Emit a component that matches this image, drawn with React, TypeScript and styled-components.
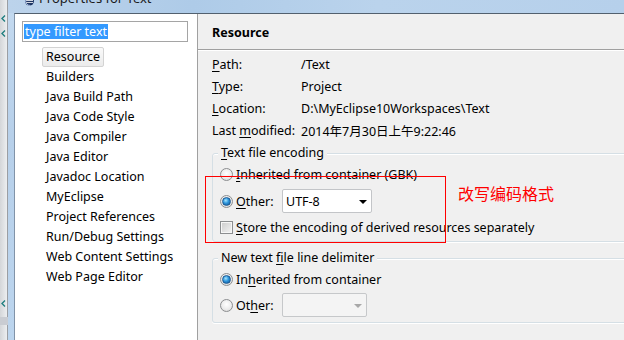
import React from "react";
import styled, { createGlobalStyle } from "styled-components";

const GlobalStyle = createGlobalStyle`
  html, body { margin: 0; padding: 0; background: #f0f0f0; }
  body {
    font-family: "Noto Sans", "Noto Sans CJK SC", sans-serif;
    font-size: 12.5px;
    color: #000;
  }
  * { box-sizing: border-box; }
`;

const Screen = styled.div`
  position: relative;
  width: 624px;
  height: 340px;
  overflow: hidden;
  display: flex;
`;

const Desktop = styled.div`
  width: 8px;
  flex: none;
  background: linear-gradient(to right, #d4d6d9, #eceef0);
  border-right: 1px solid #9b9ea3;
  display: flex;
  flex-direction: column;
  padding-top: 14px;
`;

const Chevron = styled.svg<{ $gap: number }>`
  display: block;
  margin-top: ${(p) => p.$gap}px;
  margin-left: 1px;
  flex: none;
`;

const DesktopBand = styled.div`
  margin-top: 10px;
  height: 8px;
  margin-right: -1px;
  background: #c9ccd2;
`;

const Window = styled.div`
  flex: 1;
  display: flex;
  flex-direction: column;
  background: linear-gradient(to bottom, #c4daf0, #b7d0ea 40%, #bcd5ee);
  min-width: 0;
`;

const TitleBar = styled.div`
  height: 13px;
  flex: none;
  display: flex;
  align-items: flex-start;
  padding-left: 17px;
  overflow: hidden;
  background: linear-gradient(to right, #bcd3eb, #aecbe8 30%, #bad3ec 60%, #b6d0eb);
`;

const TitleIcon = styled.svg`
  display: block;
  flex: none;
  margin-top: -5px;
`;

const TitleText = styled.span`
  margin-left: 5px;
  margin-top: -10px;
  font-size: 13px;
  line-height: 16px;
  color: #1a1a1a;
  white-space: nowrap;
`;

const Client = styled.div`
  flex: 1;
  display: flex;
  margin-left: 6px;
  border-top: 1px solid #52606e;
  border-left: 1px solid #8193a8;
  min-height: 0;
  background: #f0f0f0;
`;

const TreePane = styled.div`
  width: 183px;
  flex: none;
  background: #fff;
  border-right: 1px solid #a0a0a0;
  display: flex;
  flex-direction: column;
`;

const FilterBox = styled.div`
  margin: 7px 0 0 7px;
  width: 166px;
  height: 21px;
  border: 1px solid #a5a5a5;
  background: #fff;
  display: flex;
  align-items: center;
  padding-left: 1px;
`;

const FilterSel = styled.span`
  background: #3399ff;
  color: #fff;
  line-height: 15px;
  padding: 0 1px;
  white-space: nowrap;
`;

const TreeList = styled.div`
  margin-top: 5px;
  display: flex;
  flex-direction: column;
  padding-left: 31px;
`;

const TreeItem = styled.div<{ $selected?: boolean }>`
  height: 20px;
  display: flex;
  align-items: center;
  white-space: nowrap;
  & > span {
    padding: 0 3px;
    margin-left: -4px;
    line-height: 18px;
    border: 1px solid ${(p) => (p.$selected ? "#d3d3d3" : "transparent")};
    border-radius: 2px;
    background: ${(p) =>
      p.$selected ? "linear-gradient(to bottom, #fafafa, #ebebeb)" : "transparent"};
  }
`;

const RightPane = styled.div`
  flex: 1;
  display: flex;
  flex-direction: column;
  min-width: 0;
`;

const Header = styled.div`
  height: 36px;
  flex: none;
  padding: 11px 0 0 14px;
  font-weight: 700;
  font-size: 12.5px;
  line-height: 16px;
  border-bottom: 1px solid #a0a0a0;
  box-shadow: 0 1px 0 #ffffff;
`;

const Body = styled.div`
  padding: 3px 0 0 14px;
  display: flex;
  flex-direction: column;
`;

const InfoRow = styled.div`
  height: 22px;
  display: flex;
  align-items: center;
  white-space: nowrap;
`;

const InfoLabel = styled.span`
  width: 89px;
  flex: none;
`;

const Mn = styled.span`
  text-decoration: underline;
  text-underline-offset: 2px;
  text-decoration-thickness: 1px;
`;

const Group = styled.div<{ $top: number; $padTop: number; $padBottom: number }>`
  position: relative;
  width: 470px;
  margin-top: ${(p) => p.$top}px;
  padding: ${(p) => p.$padTop}px 0 ${(p) => p.$padBottom}px 7px;
  border: 1px solid #d5dfe5;
  border-radius: 3px;
  box-shadow: 0 1px 0 #ffffff, inset 0 1px 0 #ffffff;
  display: flex;
  flex-direction: column;
`;

const Legend = styled.span`
  position: absolute;
  top: -9px;
  left: 5px;
  padding: 0 3px;
  line-height: 16px;
  background: #f0f0f0;
  white-space: nowrap;
`;

const OptionRow = styled.div<{ $h: number; $gap: number }>`
  height: ${(p) => p.$h}px;
  margin-top: ${(p) => p.$gap}px;
  display: flex;
  align-items: center;
  white-space: nowrap;
`;

const Radio = styled.span<{ $checked?: boolean }>`
  width: 13px;
  height: 13px;
  flex: none;
  border-radius: 50%;
  border: 1px solid #8c8e90;
  background: radial-gradient(circle at 50% 40%, #ffffff 0%, #ececec 55%, #d2d2d2 100%);
  display: flex;
  align-items: center;
  justify-content: center;
  margin-right: 3px;
  &::after {
    content: "";
    display: ${(p) => (p.$checked ? "block" : "none")};
    width: 7px;
    height: 7px;
    border-radius: 50%;
    border: 1px solid #1c5a93;
    background: radial-gradient(circle at 40% 35%, #a6e6ff 0%, #2d95dc 45%, #0f4f8c 100%);
  }
`;

const Check = styled.span`
  width: 13px;
  height: 13px;
  flex: none;
  border: 1px solid #8c8e90;
  box-shadow: inset 0 0 0 1px #f6f6f6;
  background: linear-gradient(135deg, #cbcbcb, #f4f4f4);
  margin-right: 3px;
`;

const OptionLabel = styled.span<{ $w?: number }>`
  ${(p) => (p.$w ? `width: ${p.$w}px; flex: none;` : "")}
`;

const Combo = styled.div<{ $w: number; $disabled?: boolean }>`
  width: ${(p) => p.$w}px;
  height: 24px;
  flex: none;
  border: 1px solid ${(p) => (p.$disabled ? "#c6c8ca" : "#c3c5c8")};
  border-radius: 2px;
  background: ${(p) => (p.$disabled ? "#f4f4f4" : "#ffffff")};
  display: flex;
  align-items: center;
  justify-content: space-between;
  padding: 0 4px 0 3px;
`;

const ComboArrow = styled.span<{ $disabled?: boolean }>`
  width: 0;
  height: 0;
  border-left: 4px solid transparent;
  border-right: 4px solid transparent;
  border-top: 4px solid ${(p) => (p.$disabled ? "#a8a8a8" : "#000")};
  margin-top: 1px;
`;

const Annotation = styled.div`
  position: absolute;
  left: 205px;
  top: 176px;
  width: 241px;
  height: 67px;
  border: 1px solid #ff0000;
  pointer-events: none;
`;

const AnnotationText = styled.div`
  position: absolute;
  left: 458px;
  top: 182px;
  font-family: "Noto Sans CJK SC", sans-serif;
  font-size: 16px;
  line-height: 22px;
  color: #ff0000;
  white-space: nowrap;
`;

const treeItems = [
  "Resource",
  "Builders",
  "Java Build Path",
  "Java Code Style",
  "Java Compiler",
  "Java Editor",
  "Javadoc Location",
  "MyEclipse",
  "Project References",
  "Run/Debug Settings",
  "Web Content Settings",
  "Web Page Editor",
];

const ChevronIcon = ({ gap }: { gap: number }) => (
  <Chevron $gap={gap} width="5" height="7" viewBox="0 0 5 7">
    <polyline points="4,0.5 1,3.5 4,6.5" fill="none" stroke="#1f7f80" strokeWidth="1.4" />
  </Chevron>
);

export default function App() {
  return (
    <>
      <GlobalStyle />
      <Screen>
        <Desktop>
          <ChevronIcon gap={1} />
          <ChevronIcon gap={8} />
          <ChevronIcon gap={263} />
          <DesktopBand />
        </Desktop>
        <Window>
          <TitleBar>
            <TitleIcon width="9" height="12" viewBox="0 0 9 12">
              <circle cx="4.5" cy="6" r="4.5" fill="#1e3563" />
              <path d="M1 5.5 H8 M1 7.5 H8" stroke="#ffffff" strokeWidth="0.8" />
              <path d="M5 1.6 A4.4 4.4 0 0 0 5 10.4" fill="none" stroke="#9fb4d8" strokeWidth="1" />
            </TitleIcon>
            <TitleText>Properties for Text</TitleText>
          </TitleBar>
          <Client>
            <TreePane>
              <FilterBox>
                <FilterSel>type filter text</FilterSel>
              </FilterBox>
              <TreeList>
                {treeItems.map((t, i) => (
                  <TreeItem key={t} $selected={i === 0}>
                    <span>{t}</span>
                  </TreeItem>
                ))}
              </TreeList>
            </TreePane>
            <RightPane>
              <Header>Resource</Header>
              <Body>
                <InfoRow>
                  <InfoLabel>
                    <Mn>P</Mn>ath:
                  </InfoLabel>
                  <span>/Text</span>
                </InfoRow>
                <InfoRow>
                  <InfoLabel>
                    <Mn>T</Mn>ype:
                  </InfoLabel>
                  <span>Project</span>
                </InfoRow>
                <InfoRow>
                  <InfoLabel>
                    <Mn>L</Mn>ocation:
                  </InfoLabel>
                  <span>D:\MyEclipse10Workspaces\Text</span>
                </InfoRow>
                <InfoRow>
                  <InfoLabel>
                    Last <Mn>m</Mn>odified:
                  </InfoLabel>
                  <span>2014年7月30日上午9:22:46</span>
                </InfoRow>

                <Group $top={12} $padTop={10} $padBottom={4}>
                  <Legend>
                    <Mn>T</Mn>ext file encoding
                  </Legend>
                  <OptionRow $h={20} $gap={0}>
                    <Radio />
                    <OptionLabel>
                      <Mn>I</Mn>nherited from container (GBK)
                    </OptionLabel>
                  </OptionRow>
                  <OptionRow $h={24} $gap={5}>
                    <Radio $checked />
                    <OptionLabel $w={46}>
                      <Mn>O</Mn>ther:
                    </OptionLabel>
                    <Combo $w={90}>
                      <span>UTF-8</span>
                      <ComboArrow />
                    </Combo>
                  </OptionRow>
                  <OptionRow $h={20} $gap={4}>
                    <Check />
                    <OptionLabel>
                      <Mn>S</Mn>tore the encoding of derived resources separately
                    </OptionLabel>
                  </OptionRow>
                </Group>

                <Group $top={16} $padTop={10} $padBottom={5}>
                  <Legend>
                    New text <Mn>f</Mn>ile line delimiter
                  </Legend>
                  <OptionRow $h={20} $gap={0}>
                    <Radio $checked />
                    <OptionLabel>
                      In<Mn>h</Mn>erited from container
                    </OptionLabel>
                  </OptionRow>
                  <OptionRow $h={24} $gap={4}>
                    <Radio />
                    <OptionLabel $w={46}>
                      Ot<Mn>h</Mn>er:
                    </OptionLabel>
                    <Combo $w={85} $disabled>
                      <span />
                      <ComboArrow $disabled />
                    </Combo>
                  </OptionRow>
                </Group>
              </Body>
            </RightPane>
          </Client>
        </Window>
        <Annotation />
        <AnnotationText>改写编码格式</AnnotationText>
      </Screen>
    </>
  );
}
